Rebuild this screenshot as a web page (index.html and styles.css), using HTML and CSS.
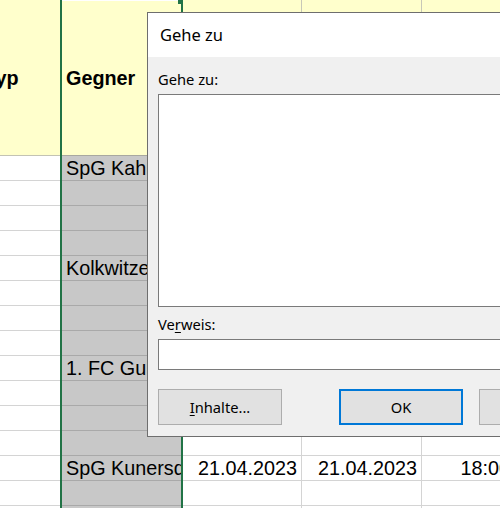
FILE: index.html
```html
<!DOCTYPE html>
<html lang="de">
<head>
<meta charset="utf-8">
<title>Gehe zu</title>
<link rel="stylesheet" href="styles.css">
</head>
<body>
<div class="sheet">
  <div class="col col-a">
    <div class="hdr"><span class="typ">Typ</span></div>
    <div class="cell"></div><div class="cell"></div><div class="cell"></div><div class="cell"></div><div class="cell"></div>
    <div class="cell"></div><div class="cell"></div><div class="cell"></div><div class="cell"></div><div class="cell"></div>
    <div class="cell"></div><div class="cell"></div><div class="cell"></div><div class="cell"></div><div class="cell"></div>
  </div>
  <div class="col col-b">
    <span class="handle"></span>
    <div class="hdr hdr-b"><span class="hdr-text">Gegner</span></div>
    <div class="cell">SpG Kahren/Komptendorf</div><div class="cell"></div><div class="cell"></div><div class="cell"></div>
    <div class="cell">Kolkwitzer SV</div><div class="cell"></div><div class="cell"></div><div class="cell"></div>
    <div class="cell">1. FC Guben</div><div class="cell"></div><div class="cell"></div><div class="cell"></div>
    <div class="cell">SpG Kunersdorf</div><div class="cell"></div><div class="cell"></div>
  </div>
  <div class="col col-c">
    <div class="hdr hdr-r"></div>
    <div class="cell num"></div><div class="cell num"></div><div class="cell num"></div><div class="cell num"></div>
    <div class="cell num"></div><div class="cell num"></div><div class="cell num"></div><div class="cell num"></div>
    <div class="cell num"></div><div class="cell num"></div><div class="cell num"></div><div class="cell num"></div>
    <div class="cell num">21.04.2023</div><div class="cell num"></div><div class="cell num"></div>
  </div>
  <div class="col col-d">
    <div class="hdr hdr-r"></div>
    <div class="cell num"></div><div class="cell num"></div><div class="cell num"></div><div class="cell num"></div>
    <div class="cell num"></div><div class="cell num"></div><div class="cell num"></div><div class="cell num"></div>
    <div class="cell num"></div><div class="cell num"></div><div class="cell num"></div><div class="cell num"></div>
    <div class="cell num">21.04.2023</div><div class="cell num"></div><div class="cell num"></div>
  </div>
  <div class="col col-e">
    <div class="hdr hdr-r"></div>
    <div class="cell num"></div><div class="cell num"></div><div class="cell num"></div><div class="cell num"></div>
    <div class="cell num"></div><div class="cell num"></div><div class="cell num"></div><div class="cell num"></div>
    <div class="cell num"></div><div class="cell num"></div><div class="cell num"></div><div class="cell num"></div>
    <div class="cell num">18:00</div><div class="cell num"></div><div class="cell num"></div>
  </div>
</div>

<div class="dialog">
  <div class="dlg-title">Gehe zu</div>
  <div class="dlg-body">
    <div class="dlg-label">Gehe zu:</div>
    <div class="listbox"></div>
    <div class="dlg-label label-ref">Ve<u>r</u>weis:</div>
    <div class="textbox"></div>
    <div class="buttons">
      <div class="btn"><u>I</u>nhalte...</div>
      <div class="btn btn-ok">OK</div>
      <div class="btn btn-cancel">Abbrechen</div>
    </div>
  </div>
</div>
</body>
</html>
```
FILE: styles.css
```css
html, body {
  margin: 0;
  padding: 0;
}
body {
  width: 500px;
  height: 508px;
  overflow: hidden;
  position: relative;
  background: #ffffff;
  font-family: "Liberation Sans", Arial, sans-serif;
  color: #000000;
}

/* ---------- spreadsheet ---------- */
.sheet {
  display: flex;
  align-items: flex-start;
}
.col {
  flex: none;
}
.col-a { width: 60px; }
.col-b {
  width: 119px;
  border-left: 2px solid #217346;
  border-right: 2px solid #217346;
  position: relative;
  background: #c8c8c8;
}
.col-c { width: 119px; }
.col-d { width: 120px; }
.col-e { width: 93px; }

.hdr {
  height: 156px;
  box-sizing: border-box;
  background: #ffffcc;
  border-bottom: 1px solid #c3c3b4;
  display: flex;
  align-items: center;
  font-weight: bold;
  font-size: 19.8px;
  line-height: 24px;
  white-space: nowrap;
  overflow: hidden;
}
.typ {
  margin-left: -15px;
}
.hdr-b {
  border-top: 1px solid #ffffff;
  border-bottom-color: #a8a8a0;
  padding-left: 4px;
}
.hdr-r {
  border-right: 1px solid #c8c8b8;
}

.cell {
  height: 25px;
  box-sizing: border-box;
  border-bottom: 1px solid #d4d4d4;
  font-size: 19.8px;
  line-height: 24px;
  white-space: nowrap;
  overflow: hidden;
  padding: 0 4px;
}
.col-b .cell {
  border-bottom-color: #a9a9a9;
}
.num {
  text-align: right;
  border-right: 1px solid #d4d4d4;
}

.handle {
  position: absolute;
  top: 0;
  right: -2px;
  width: 5px;
  height: 4px;
  background: #217346;
}

/* ---------- dialog ---------- */
.dialog {
  position: absolute;
  left: 147px;
  top: 12px;
  width: 400px;
  height: 425px;
  box-sizing: border-box;
  border: 1px solid #6e6e6e;
  background: #f0f0f0;
  font-family: "Noto Sans", "Segoe UI", sans-serif;
  color: #000000;
}
.dlg-title {
  height: 44px;
  background: #ffffff;
  font-size: 16.5px;
  line-height: 44px;
  padding-left: 12px;
}
.dlg-body {
  padding: 12px 10px 11px 10px;
}
.dlg-label {
  font-size: 14.7px;
  line-height: 20px;
}
.dlg-label u {
  text-underline-offset: 2px;
}
.listbox {
  margin-top: 5px;
  height: 213px;
  box-sizing: border-box;
  border: 1px solid #7a7a7a;
  background: #ffffff;
}
.label-ref {
  margin-top: 7px;
}
.textbox {
  margin-top: 5px;
  height: 31px;
  box-sizing: border-box;
  border: 1px solid #7a7a7a;
  background: #ffffff;
}
.buttons {
  margin-top: 19px;
  display: flex;
}
.btn {
  flex: none;
  width: 124px;
  height: 36px;
  box-sizing: border-box;
  border: 1px solid #adadad;
  background: #e1e1e1;
  display: flex;
  align-items: center;
  justify-content: center;
  font-size: 14.7px;
}
.btn u {
  text-underline-offset: 2px;
}
.btn-ok {
  margin-left: 57px;
  border: 2px solid #0078d7;
}
.btn-cancel {
  margin-left: 16px;
}
```
